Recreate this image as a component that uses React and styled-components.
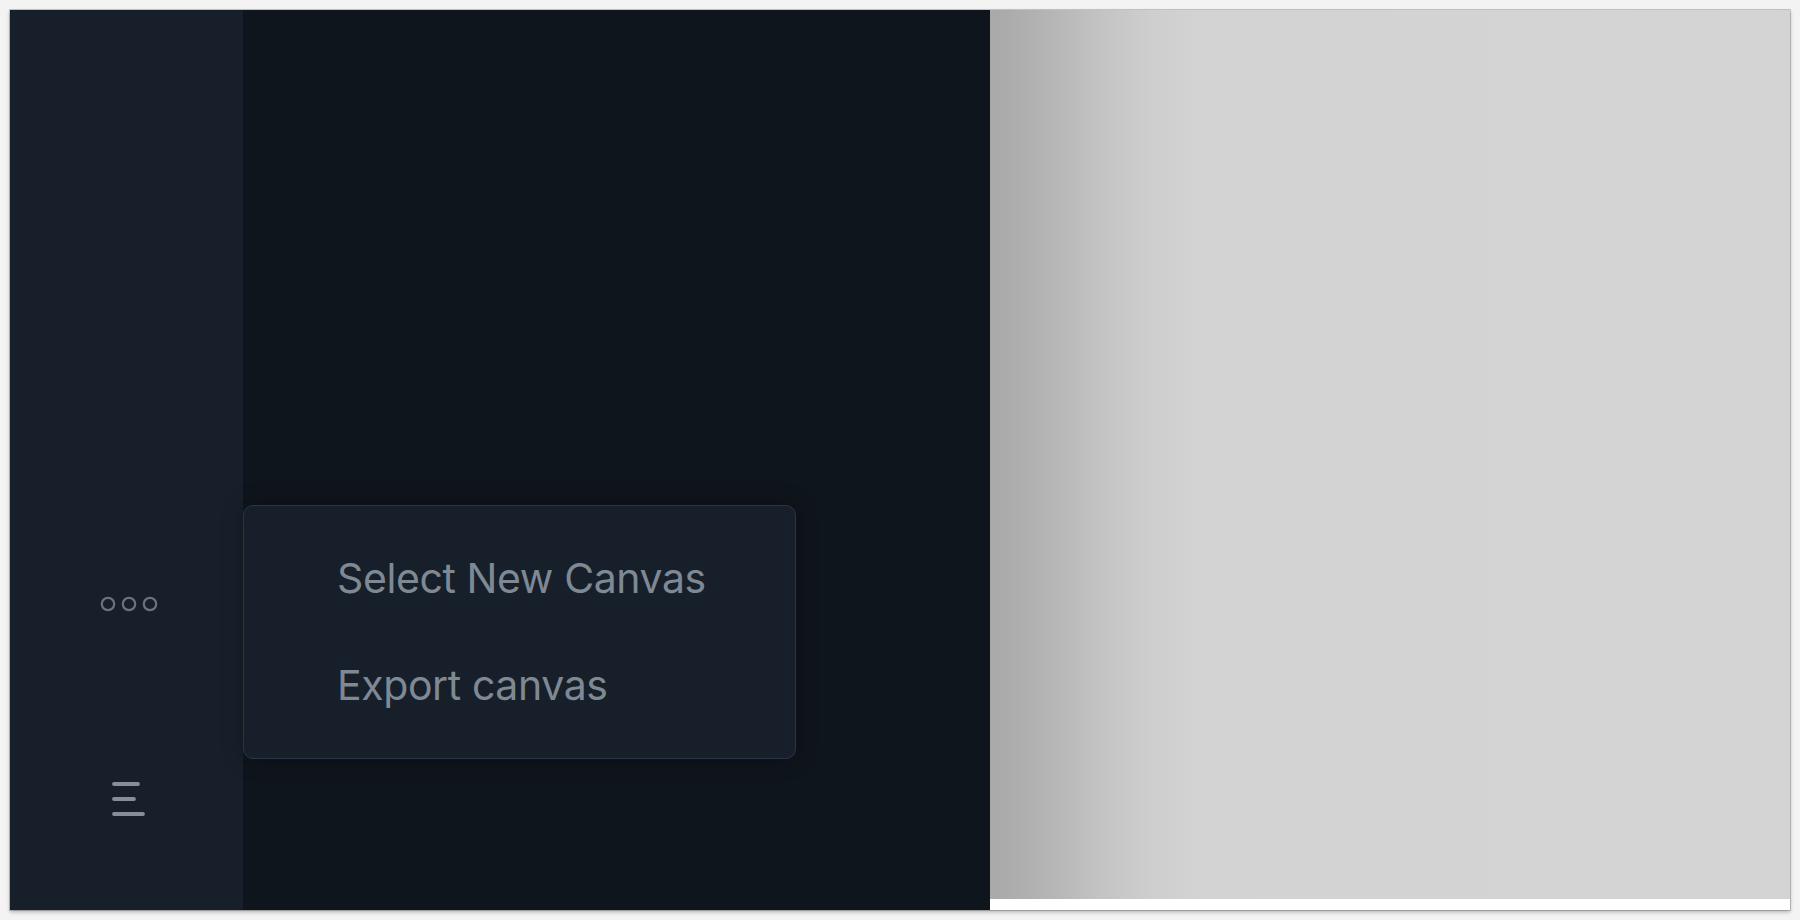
import React from "react";
import styled, { createGlobalStyle } from "styled-components";

const Global = createGlobalStyle`
  html, body {
    margin: 0;
    padding: 0;
    background: #f3f3f3;
    font-family: Inter, "Liberation Sans", sans-serif;
  }
  #root {
    padding: 10px;
  }
`;

const Window = styled.div`
  position: relative;
  display: flex;
  width: 1780px;
  height: 900px;
  overflow: hidden;
  box-shadow: 0 0 0 1px rgba(0, 0, 0, 0.18), 0 2px 4px rgba(0, 0, 0, 0.28);
`;

const Sidebar = styled.aside`
  flex: 0 0 233px;
  display: flex;
  flex-direction: column;
  justify-content: flex-end;
  align-items: center;
  gap: 131px;
  padding: 0 0 79px 4px;
  box-sizing: border-box;
  background: #17202a;
`;

const IconButton = styled.button`
  display: flex;
  align-items: center;
  justify-content: center;
  width: 72px;
  height: 64px;
  padding: 0;
  border: 0;
  background: transparent;
  color: ${(p) => p.$color};
  cursor: pointer;
`;

const Main = styled.main`
  flex: 0 0 747px;
  background: #0f151c;
`;

const Preview = styled.section`
  flex: 1;
  display: flex;
  flex-direction: column;
`;

const PreviewCanvas = styled.div`
  flex: 1;
  background: linear-gradient(
    to right,
    #a9a9a9 0px,
    #acacac 20px,
    #b5b5b5 60px,
    #c3c3c3 110px,
    #cecece 160px,
    #d3d3d3 210px,
    #d4d4d4 100%
  );
`;

const PreviewFooter = styled.div`
  flex: 0 0 11px;
  background: #ffffff;
`;

const Menu = styled.div`
  position: absolute;
  left: 233px;
  top: 495px;
  width: 553px;
  height: 254px;
  box-sizing: border-box;
  display: flex;
  flex-direction: column;
  justify-content: center;
  background: #17202a;
  border: 1.5px solid #29364a;
  border-radius: 10px;
  box-shadow: 0 0 22px rgba(0, 0, 0, 0.3);
`;

const MenuItem = styled.div`
  height: 107px;
  line-height: 107px;
  padding-left: 93px;
  font-family: Inter, "Liberation Sans", sans-serif;
  font-size: 41px;
  font-weight: 400;
  letter-spacing: -0.4px;
  color: #7e8994;
  white-space: nowrap;
  cursor: pointer;
`;

const DotsIcon = () => (
  <svg width="58" height="18" viewBox="0 0 58 18" fill="none">
    <circle cx="8" cy="9" r="6.2" stroke="currentColor" strokeWidth="2.2" />
    <circle cx="29" cy="9" r="6.2" stroke="currentColor" strokeWidth="2.2" />
    <circle cx="50" cy="9" r="6.2" stroke="currentColor" strokeWidth="2.2" />
  </svg>
);

const MenuIcon = () => (
  <svg width="34" height="36" viewBox="0 0 34 36" fill="none">
    <g stroke="currentColor" strokeWidth="3.8" strokeLinecap="round">
      <line x1="2" y1="3" x2="26" y2="3" />
      <line x1="2" y1="18" x2="22" y2="18" />
      <line x1="2" y1="33" x2="31" y2="33" />
    </g>
  </svg>
);

export default function App() {
  return (
    <>
      <Global />
      <Window>
        <Sidebar>
          <IconButton $color="#6b747d" aria-label="More">
            <DotsIcon />
          </IconButton>
          <IconButton $color="#868e97" aria-label="Menu">
            <MenuIcon />
          </IconButton>
        </Sidebar>
        <Main />
        <Preview>
          <PreviewCanvas />
          <PreviewFooter />
        </Preview>
        <Menu>
          <MenuItem>Select New Canvas</MenuItem>
          <MenuItem>Export canvas</MenuItem>
        </Menu>
      </Window>
    </>
  );
}
